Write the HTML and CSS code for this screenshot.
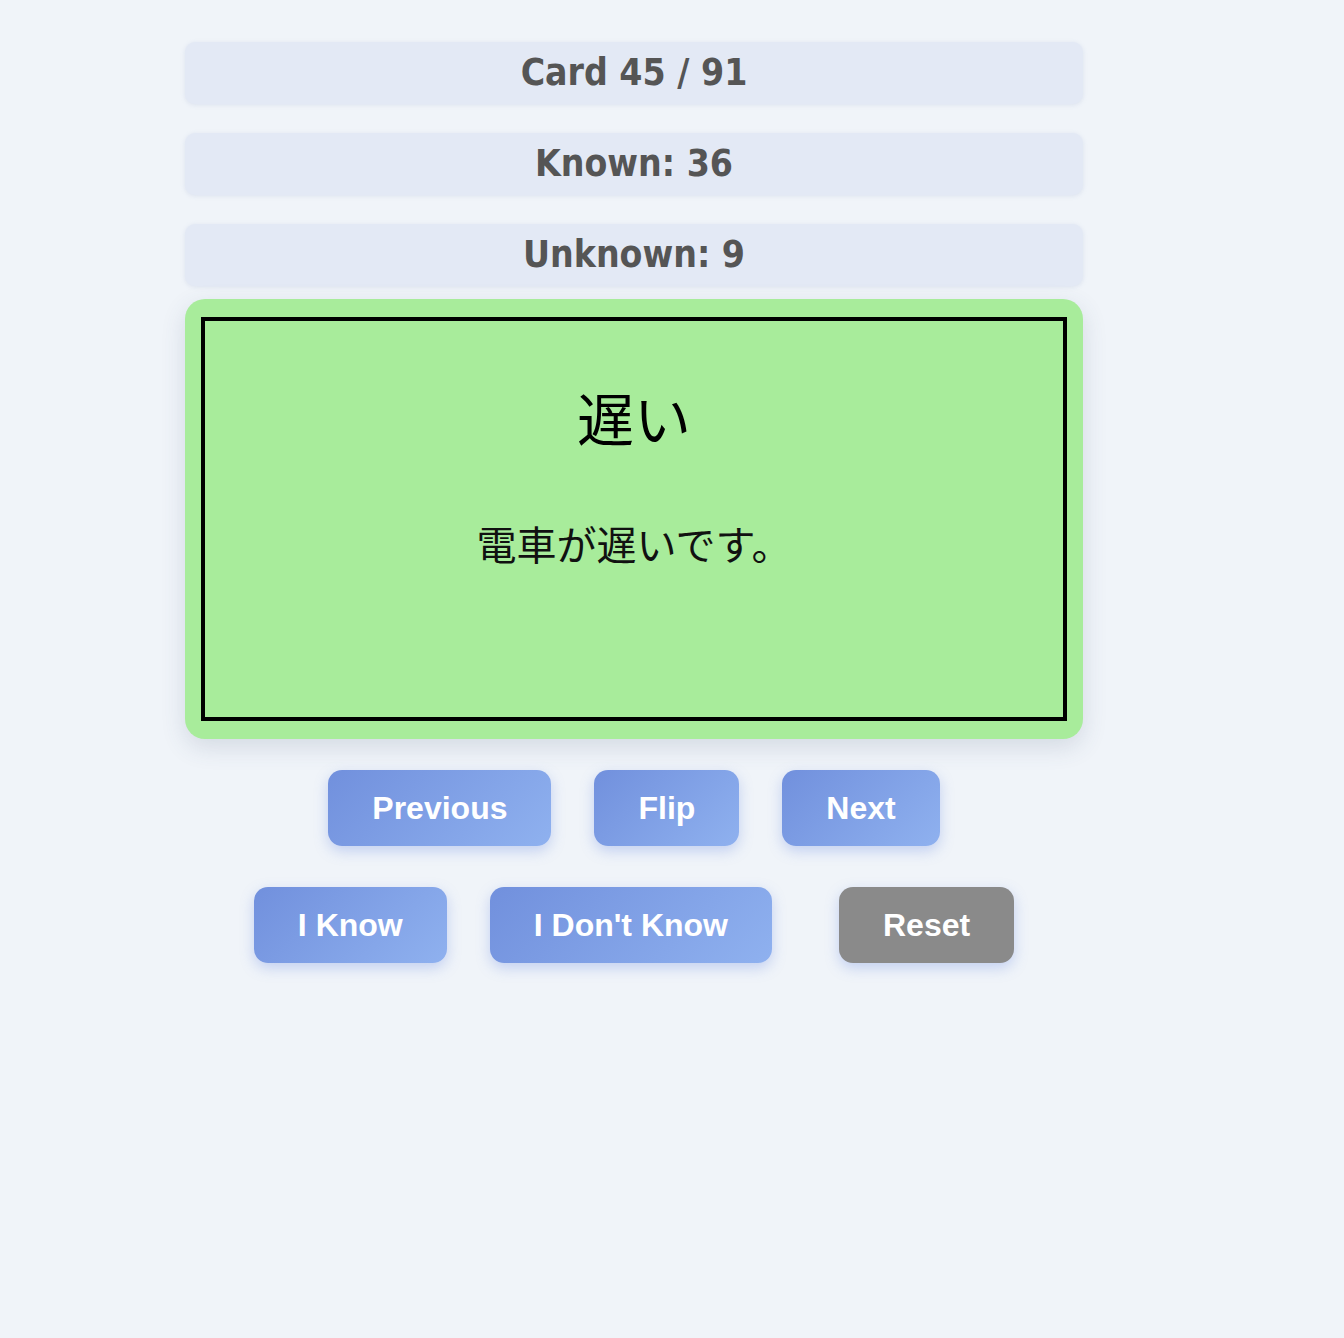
FILE: index.html
```html
<!DOCTYPE html>
<html lang="ja">
<head>
<meta charset="utf-8">
<title>Flashcards</title>
<link rel="stylesheet" href="styles.css">
</head>
<body>
<main class="app">
  <div class="stat">Card 45 / 91</div>
  <div class="stat">Known: 36</div>
  <div class="stat">Unknown: 9</div>
  <section class="card">
    <div class="card-inner">
      <div class="word">遅い</div>
      <div class="example">電車が遅いです。</div>
    </div>
  </section>
  <div class="row">
    <button class="btn">Previous</button>
    <button class="btn">Flip</button>
    <button class="btn">Next</button>
  </div>
  <div class="row">
    <button class="btn">I Know</button>
    <button class="btn">I Don't Know</button>
    <button class="btn btn-reset">Reset</button>
  </div>
</main>
</body>
</html>
```

FILE: styles.css
```css
html, body {
  margin: 0;
  padding: 0;
  background: #f0f4f9;
}
body {
  font-family: "Liberation Sans", Arial, sans-serif;
  min-height: 1338px;
}
.app {
  width: 898px;
  margin-left: 185px;
  padding-top: 42px;
  display: flex;
  flex-direction: column;
}
.stat {
  height: 62px;
  line-height: 62px;
  text-align: center;
  background: #e3e9f5;
  border-radius: 10px;
  box-shadow: 0 1px 4px rgba(160, 175, 210, 0.25);
  color: #555555;
  font-family: "DejaVu Sans Condensed", "DejaVu Sans", sans-serif;
  font-weight: bold;
  font-size: 37px;
  margin-bottom: 29px;
}
.stat:nth-of-type(3) {
  margin-bottom: 13px;
}
.card {
  background: #a8ec9b;
  border-radius: 20px;
  padding: 18px 16px;
  box-shadow: 0 8px 24px rgba(60, 80, 110, 0.16);
}
.card-inner {
  border: 4px solid #000;
  height: 396px;
  text-align: center;
  color: #000;
  font-family: "Noto Sans CJK JP", sans-serif;
}
.word {
  font-size: 57px;
  line-height: 66px;
  margin-top: 62px;
}
.example {
  font-size: 40px;
  line-height: 52px;
  margin-top: 68px;
  color: #111;
}
.row {
  display: flex;
  justify-content: center;
  gap: 43px;
  margin-top: 31px;
}
.row + .row {
  margin-top: 41px;
}
.btn {
  height: 76px;
  padding: 0 44px;
  border: none;
  border-radius: 14px;
  background: linear-gradient(135deg, #7190dd 0%, #8fb1ef 100%);
  color: #fff;
  font-family: "Liberation Sans", Arial, sans-serif;
  font-weight: bold;
  font-size: 32px;
  box-shadow: 0 5px 14px rgba(110, 140, 225, 0.35);
  cursor: pointer;
}
.btn-reset {
  background: #8a8a8a;
  margin-left: 24px;
}
```
